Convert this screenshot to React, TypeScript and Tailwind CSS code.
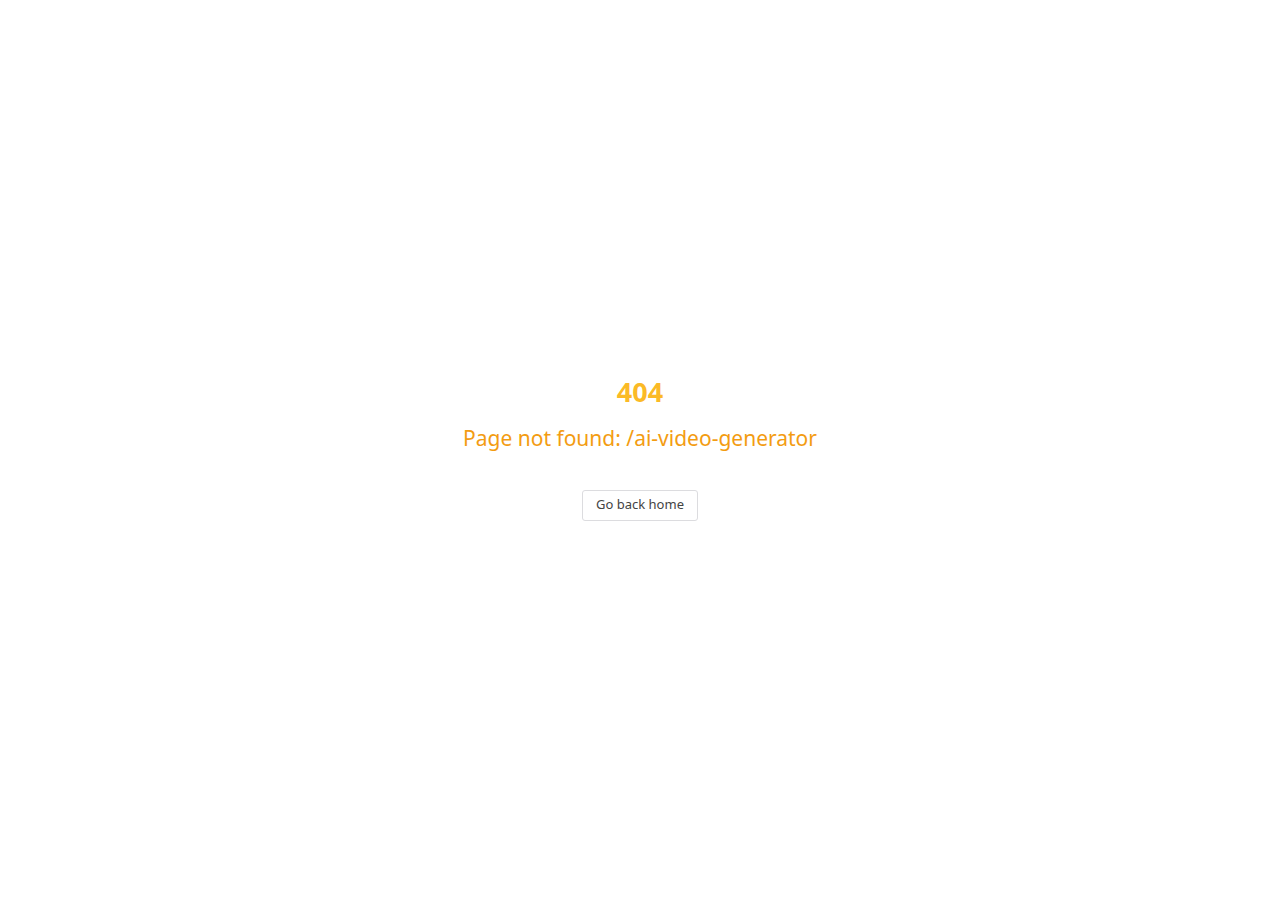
export default function App() {
  return (
    <div className="flex h-[900px] w-full flex-col items-center justify-center bg-white font-['Noto_Sans',sans-serif]">
      <h1 className="text-[27px] font-bold leading-[30px] text-[#fbba26]">404</h1>
      <p className="mt-[17px] text-[21px] leading-[28px] text-[#f39c12]">Page not found: /ai-video-generator</p>
      <button className="mt-[38px] mb-[3px] h-[31px] rounded-[3px] border border-[#dcdcdf] bg-white px-[13px] text-[13px] text-[#444]">
        Go back home
      </button>
    </div>
  );
}
